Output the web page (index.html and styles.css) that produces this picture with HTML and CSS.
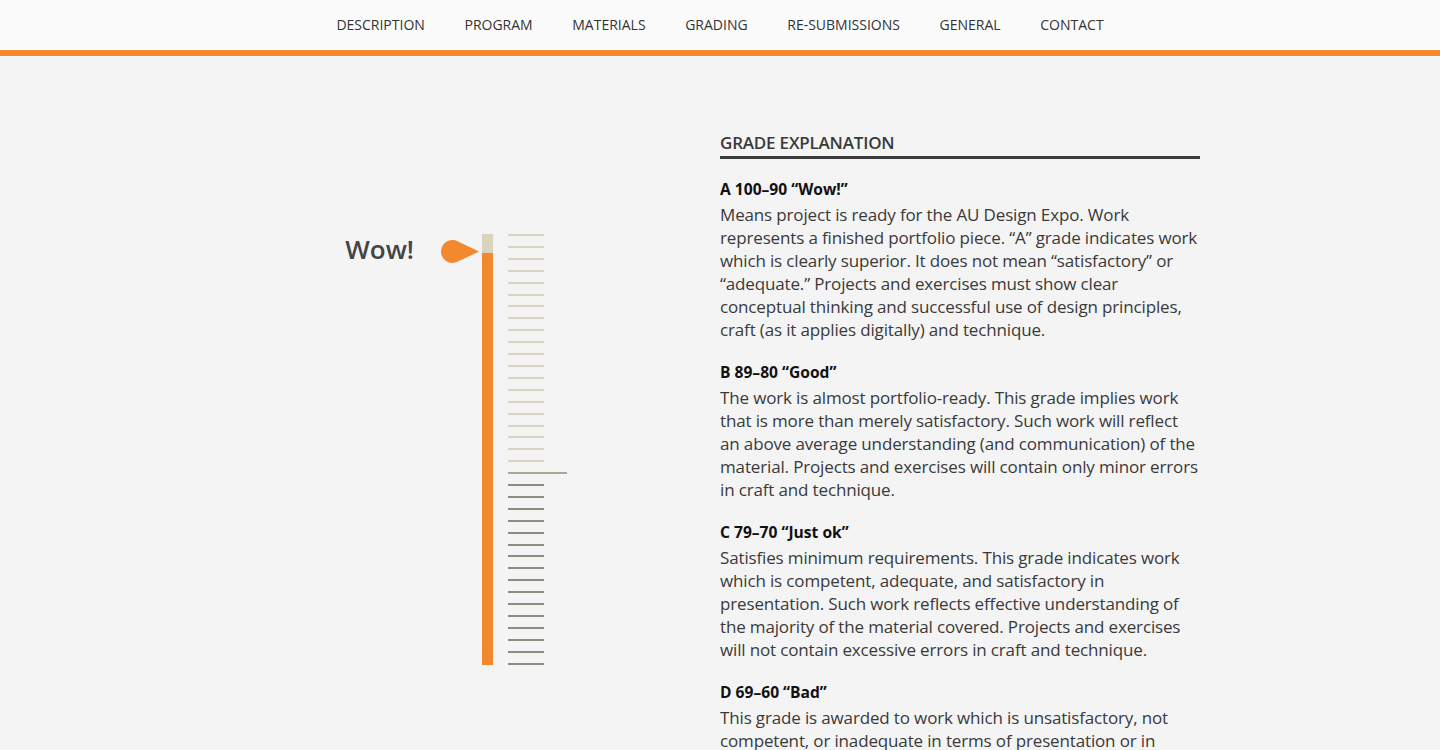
FILE: index.html
```html
<!DOCTYPE html>
<html lang="en">
<head>
<meta charset="utf-8">
<title>Grading</title>
<link rel="stylesheet" href="styles.css">
</head>
<body>
<header class="site-header">
  <nav class="nav">
    <a href="#">DESCRIPTION</a>
    <a href="#">PROGRAM</a>
    <a href="#">MATERIALS</a>
    <a href="#">GRADING</a>
    <a href="#">RE-SUBMISSIONS</a>
    <a href="#">GENERAL</a>
    <a href="#">CONTACT</a>
  </nav>
</header>
<main class="main">
  <section class="gauge-col">
    <div class="gauge">
      <div class="bar">
        <div class="bar-empty" style="height:19px"></div>
        <div class="bar-fill"></div>
        <div class="pointer" style="top:5px">
          <span class="pointer-label">Wow!</span>
          <svg class="pointer-icon" width="40" height="25" viewBox="0 0 40 25"><path d="M39 12.5 L17.5 2.14 A11.5 11.5 0 1 0 17.5 22.86 Z" fill="#f3882f"/></svg>
        </div>
      </div>
      <div class="ticks">
        <i class="t a"></i><i class="t a"></i><i class="t a"></i><i class="t a"></i><i class="t a"></i>
        <i class="t a"></i><i class="t a"></i><i class="t a"></i><i class="t a"></i><i class="t a"></i>
        <i class="t a"></i><i class="t a"></i><i class="t a"></i><i class="t a"></i><i class="t a"></i>
        <i class="t a"></i><i class="t a"></i><i class="t a"></i><i class="t a"></i><i class="t a"></i>
        <i class="t mid"></i>
        <i class="t b"></i><i class="t b"></i><i class="t b"></i><i class="t b"></i>
        <i class="t b"></i><i class="t b"></i><i class="t b"></i><i class="t b"></i>
        <i class="t b"></i><i class="t b"></i><i class="t b"></i><i class="t b"></i>
        <i class="t b"></i><i class="t b"></i><i class="t b"></i><i class="t b"></i>
      </div>
    </div>
  </section>
  <section class="text-col">
    <h2 class="section-title">GRADE EXPLANATION</h2>
    <div class="grade">
      <h3>A 100–90 “Wow!”</h3>
      <p>Means project is ready for the AU Design Expo. Work represents a finished portfolio piece. “A” grade indicates work which is clearly superior. It does not mean “satisfactory” or “adequate.” Projects and exercises must show clear conceptual thinking and successful use of design principles, craft (as it applies digitally) and technique.</p>
    </div>
    <div class="grade">
      <h3>B 89–80 “Good”</h3>
      <p>The work is almost portfolio-ready. This grade implies work that is more than merely satisfactory. Such work will reflect an above average understanding (and communication) of the material. Projects and exercises will contain only minor errors in craft and technique.</p>
    </div>
    <div class="grade">
      <h3>C 79–70 “Just ok”</h3>
      <p>Satisfies minimum requirements. This grade indicates work which is competent, adequate, and satisfactory in presentation. Such work reflects effective understanding of the majority of the material covered. Projects and exercises will not contain excessive errors in craft and technique.</p>
    </div>
    <div class="grade">
      <h3>D 69–60 “Bad”</h3>
      <p>This grade is awarded to work which is unsatisfactory, not competent, or inadequate in terms of presentation or in understanding of the material covered. Projects and exercises will contain significant errors in craft and technique.</p>
    </div>
  </section>
</main>
</body>
</html>
```

FILE: styles.css
```css
* { box-sizing: border-box; }
html, body {
  margin: 0;
  padding: 0;
  background: #f4f4f4;
  font-family: "Open Sans", "Liberation Sans", sans-serif;
  color: #333;
}
.site-header {
  background: #fbfbfb;
  border-bottom: 6px solid #f3882f;
}
.nav {
  height: 50px;
  display: flex;
  justify-content: center;
  gap: 39.6px;
}
.nav a {
  font-size: 14px;
  line-height: 50px;
  color: #333;
  text-decoration: none;
}
.main {
  width: 960px;
  margin: 0 auto;
  padding-top: 75px;
  display: grid;
  grid-template-columns: 480px 480px;
}
.gauge-col {
  padding-top: 103px;
  padding-left: 242px;
}
.gauge {
  display: flex;
  gap: 15px;
  align-items: flex-start;
}
.bar {
  position: relative;
  width: 11px;
  height: 431px;
  display: flex;
  flex-direction: column;
}
.bar-empty { background: #d8d4bf; flex: none; }
.bar-fill { background: #f3882f; flex: 1; }
.pointer {
  position: absolute;
  right: calc(100% + 2px);
  display: flex;
  align-items: center;
  gap: 26px;
}
.pointer-label {
  font-size: 26px;
  font-weight: 600;
  color: #444;
  line-height: 25px;
  margin-top: -5px;
  white-space: nowrap;
}
.pointer-icon { display: block; flex: none; }
.ticks {
  height: 431px;
  display: flex;
  flex-direction: column;
  justify-content: space-between;
  align-items: flex-start;
}
.t {
  display: block;
  width: 36px;
  height: 2px;
}
.t.a { background: #d9d5c0; }
.t.mid { background: #a9a795; width: 59px; }
.t.b { background: #8f8c81; }
.text-col {
  padding-bottom: 40px;
}
.section-title {
  margin: 0 0 20px;
  font-size: 17px;
  letter-spacing: -0.2px;
  font-weight: 600;
  line-height: 24px;
  color: #3a3a3a;
  padding-bottom: 1px;
  border-bottom: 3px solid #3a3a3a;
}
.grade { margin-bottom: 21px; }
.grade h3 {
  margin: 0 0 4px;
  font-size: 15.6px;
  font-weight: 700;
  line-height: 20px;
  color: #111;
}
.grade p {
  margin: 0;
  font-size: 17px;
  letter-spacing: -0.15px;
  line-height: 23px;
  color: #3a3a3a;
}
```
